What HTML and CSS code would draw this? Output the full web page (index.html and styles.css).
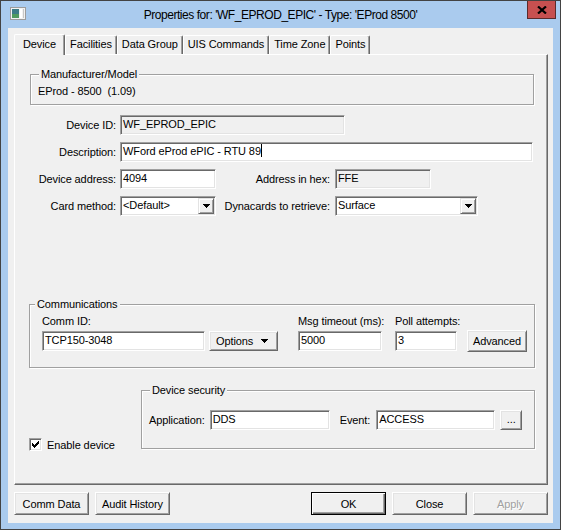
FILE: index.html
```html
<!DOCTYPE html>
<html lang="en">
<head>
    <meta charset="UTF-8">
    <title>Properties for: 'WF_EPROD_EPIC'</title>
    <link rel="stylesheet" href="styles.css">
</head>
<body>
    <div class="window">
        <!-- title bar -->
        <div class="titlebar">
            <svg class="app-icon" width="16" height="13" viewBox="0 0 16 13">
                <rect x="0.5" y="0.5" width="15" height="12" fill="#f2f2f2" stroke="#9c9c9c"/>
                <rect x="2" y="2" width="7" height="9" fill="#3c7c86"/>
                <rect x="2" y="7" width="7" height="4" fill="#4f9a5e"/>
                <rect x="10" y="2" width="2" height="9" fill="#ffffff"/>
                <rect x="13" y="2" width="1" height="9" fill="#c8c8c8"/>
            </svg>
            <div class="title">Properties for: 'WF_EPROD_EPIC' - Type: 'EProd 8500'</div>
            <div class="close">
                <svg width="10" height="8" viewBox="0 0 10 8">
                    <path d="M1 0.5 L9 7.5 M9 0.5 L1 7.5" stroke="#000" stroke-width="2.2"/>
                </svg>
            </div>
        </div>

        <div class="client">
            <!-- tabs -->
            <div class="tabs">
                <div class="tab active">Device</div>
                <div class="tab">Facilities</div>
                <div class="tab">Data Group</div>
                <div class="tab">UIS Commands</div>
                <div class="tab">Time Zone</div>
                <div class="tab">Points</div>
            </div>

            <div class="panel">
                <div class="group manuf">
                    <div class="group-title">Manufacturer/Model</div>
                    <div class="model">EProd - 8500&nbsp; (1.09)</div>
                </div>

                <div class="form">
                    <div class="row">
                        <span class="lbl">Device ID:</span>
                        <div class="field disabled w-id">WF_EPROD_EPIC</div>
                    </div>
                    <div class="row">
                        <span class="lbl">Description:</span>
                        <div class="field w-desc">WFord eProd ePIC - RTU 89<span class="caret"></span></div>
                    </div>
                    <div class="row">
                        <span class="lbl">Device address:</span>
                        <div class="field w-small">4094</div>
                        <span class="lbl2">Address in hex:</span>
                        <div class="field disabled w-small">FFE</div>
                    </div>
                    <div class="row">
                        <span class="lbl">Card method:</span>
                        <div class="field combo w-small">
                            <span class="combo-text">&lt;Default&gt;</span>
                            <span class="drop-btn">
                                <svg width="7" height="4" viewBox="0 0 7 4" shape-rendering="crispEdges"><path d="M0 0h7v1H0zM1 1h5v1H1zM2 2h3v1H2zM3 3h1v1H3z"/></svg>
                            </span>
                        </div>
                        <span class="lbl2">Dynacards to retrieve:</span>
                        <div class="field combo w-dyna">
                            <span class="combo-text">Surface</span>
                            <span class="drop-btn">
                                <svg width="7" height="4" viewBox="0 0 7 4" shape-rendering="crispEdges"><path d="M0 0h7v1H0zM1 1h5v1H1zM2 2h3v1H2zM3 3h1v1H3z"/></svg>
                            </span>
                        </div>
                    </div>
                </div>

                <!-- communications -->
                <div class="group comm">
                    <div class="group-title">Communications</div>
                    <div class="comm-body">
                        <div class="col">
                            <span class="col-lbl">Comm ID:</span>
                            <div class="col-row">
                                <div class="field w-comm">TCP150-3048</div>
                                <div class="btn options">
                                    <span>Options</span>
                                    <svg width="7" height="4" viewBox="0 0 7 4" shape-rendering="crispEdges"><path d="M0 0h7v1H0zM1 1h5v1H1zM2 2h3v1H2zM3 3h1v1H3z"/></svg>
                                </div>
                            </div>
                        </div>
                        <div class="col col-timeout">
                            <span class="col-lbl">Msg timeout (ms):</span>
                            <div class="field w-timeout">5000</div>
                        </div>
                        <div class="col col-poll">
                            <span class="col-lbl">Poll attempts:</span>
                            <div class="field w-poll">3</div>
                        </div>
                        <div class="btn advanced">Advanced</div>
                    </div>
                </div>

                <div class="lower">
                    <div class="enable">
                        <span class="checkbox">
                            <svg width="9" height="9" viewBox="0 0 9 9" shape-rendering="crispEdges"><path d="M1 3h1v3H1zM2 4h1v3H2zM3 5h1v3H3zM4 4h1v3H4zM5 3h1v3H5zM6 2h1v3H6zM7 1h1v3H7z"/></svg>
                        </span>
                        <span>Enable device</span>
                    </div>
                    <div class="group security">
                        <div class="group-title">Device security</div>
                        <div class="sec-body">
                            <span class="sec-lbl">Application:</span>
                            <div class="field w-app">DDS</div>
                            <span class="sec-lbl event-lbl">Event:</span>
                            <div class="field w-event">ACCESS</div>
                            <div class="btn dots">...</div>
                        </div>
                    </div>
                </div>
            </div>

            <!-- dialog buttons -->
            <div class="actions">
                <div class="btn">Comm Data</div>
                <div class="btn">Audit History</div>
                <div class="btn default ok">OK</div>
                <div class="btn">Close</div>
                <div class="btn disabled">Apply</div>
            </div>
        </div>
    </div>
</body>
</html>
```

FILE: styles.css
```css
* {
    box-sizing: border-box;
    margin: 0;
    padding: 0;
}

body {
    font-family: "Liberation Sans", Arial, sans-serif;
    font-size: 11px;
    letter-spacing: -0.1px;
    color: #000;
    background: #fff;
}

/* window frame */
.window {
    width: 561px;
    height: 530px;
    background: #aacbee;
    border: 1px solid #434343;
    display: flex;
    flex-direction: column;
}

.titlebar {
    height: 27px;
    display: flex;
    align-items: flex-start;
    flex: none;
}

.app-icon {
    margin: 6px 0 0 9px;
    flex: none;
}

.title {
    flex: 1;
    text-align: center;
    padding: 7px 0 0 8px;
    font-size: 12px;
    line-height: 15px;
    letter-spacing: -0.45px;
    white-space: nowrap;
}

.close {
    width: 29px;
    height: 18px;
    margin-right: 4px;
    background: #c75050;
    border: 1px solid #5b2b2b;
    border-top: none;
    display: flex;
    align-items: center;
    justify-content: center;
    flex: none;
}

.client {
    flex: 1;
    margin: 0 7px 6px;
    background: #f0f0f0;
    padding: 6px 5px 0 6px;
    display: flex;
    flex-direction: column;
}

/* tabs */
.tabs {
    display: flex;
    align-items: flex-end;
}

.tab {
    height: 19px;
    padding: 0 4px;
    line-height: 17px;
    white-space: nowrap;
    border: 1px solid;
    border-color: #fff #696969 transparent #fff;
    border-bottom: none;
    border-radius: 2px 2px 0 0;
    box-shadow: inset -1px 0 0 #a0a0a0;
}

.tab.active {
    height: 21px;
    padding: 0 8px;
    line-height: 18px;
    margin-bottom: -1px;
    background: #f0f0f0;
    position: relative;
    z-index: 1;
}

.panel {
    width: 534px;
    height: 431px;
    flex: none;
    border: 1px solid;
    border-color: #fff #696969 #696969 #fff;
    box-shadow: inset -1px -1px 0 #a0a0a0;
}

/* group boxes */
.group {
    border: 1px solid #a0a0a0;
    box-shadow: inset 1px 1px 0 #fff, 1px 1px 0 #fff;
}

.group-title {
    width: fit-content;
    margin: -7px 0 0 8px;
    padding: 0 2px;
    line-height: 13px;
    background: #f0f0f0;
}

.manuf {
    margin: 19px 0 0 15px;
    width: 504px;
    height: 31px;
}

.model {
    margin: 4px 0 0 7px;
    line-height: 13px;
    white-space: pre;
}

/* form rows */
.form {
    margin-top: 10px;
    display: flex;
    flex-direction: column;
    gap: 7px;
}

.row {
    display: flex;
    align-items: center;
    height: 20px;
}

.lbl {
    width: 101px;
    margin-right: 4px;
    text-align: right;
    white-space: nowrap;
}

.lbl2 {
    width: 114px;
    margin-right: 5px;
    text-align: right;
    white-space: nowrap;
}

.field {
    height: 20px;
    padding-left: 2px;
    line-height: 17px;
    white-space: nowrap;
    overflow: hidden;
    background: #fff;
    border: 1px solid;
    border-color: #a0a0a0 #fff #fff #a0a0a0;
    box-shadow: inset 1px 1px 0 #696969, inset -1px -1px 0 #e3e3e3;
    flex: none;
}

.field.disabled {
    background: #f0f0f0;
}

.caret {
    display: inline-block;
    width: 1px;
    height: 13px;
    background: #000;
    vertical-align: -2px;
}

.w-id { width: 225px; }
.w-desc { width: 413px; }
.w-small { width: 96px; }
.w-dyna { width: 143px; }
.w-comm { width: 163px; }
.w-timeout { width: 84px; }
.w-poll { width: 62px; }
.w-app { width: 120px; }
.w-event { width: 119px; }

.combo {
    display: flex;
    padding: 1px;
}

.combo-text {
    flex: 1;
    padding-left: 1px;
    line-height: 15px;
}

.drop-btn {
    width: 16px;
    height: 16px;
    display: flex;
    align-items: center;
    justify-content: center;
    background: #f0f0f0;
    border: 1px solid;
    border-color: #e3e3e3 #696969 #696969 #e3e3e3;
    box-shadow: inset 1px 1px 0 #fff, inset -1px -1px 0 #a0a0a0;
}

/* buttons */
.btn {
    height: 23px;
    width: 75px;
    display: flex;
    align-items: center;
    justify-content: center;
    white-space: nowrap;
    background: #f0f0f0;
    border: 1px solid;
    border-color: #fff #696969 #696969 #fff;
    box-shadow: inset 1px 1px 0 #e3e3e3, inset -1px -1px 0 #a0a0a0;
    flex: none;
}

.btn.default {
    border-color: #000;
    box-shadow: inset 1px 1px 0 #fff, inset -1px -1px 0 #696969, inset -2px -2px 0 #a0a0a0;
}

.btn.disabled {
    color: #a0a0a0;
    text-shadow: 1px 1px 0 #fff;
}

/* communications */
.comm {
    margin: 88px 0 0 14px;
    width: 506px;
    height: 64px;
}

.comm .group-title {
    margin-left: 5px;
}

.comm-body {
    display: flex;
    align-items: flex-end;
    margin-top: 4px;
    padding-left: 12px;
}

.col {
    display: flex;
    flex-direction: column;
    flex: none;
}

.col-lbl {
    line-height: 13px;
    margin-bottom: 3px;
    white-space: nowrap;
}

.col-row {
    display: flex;
}

.options {
    width: 69px;
    height: 20px;
    margin-left: 4px;
    justify-content: space-between;
    padding: 0 9px 0 6px;
}

.col-timeout {
    width: 84px;
    margin-left: 20px;
}

.col-poll {
    width: 62px;
    margin-left: 13px;
}

.advanced {
    width: 60px;
    height: 22px;
    margin: 0 0 -1px 10px;
}

/* lower area */
.lower {
    display: flex;
    margin-top: 22px;
}

.enable {
    width: 126px;
    height: 13px;
    margin-top: 48px;
    padding-left: 14px;
    display: flex;
    align-items: center;
    gap: 5px;
    white-space: nowrap;
}

.checkbox {
    width: 13px;
    height: 13px;
    flex: none;
    display: flex;
    align-items: center;
    justify-content: center;
    background: #fff;
    border: 1px solid;
    border-color: #a0a0a0 #fff #fff #a0a0a0;
    box-shadow: inset 1px 1px 0 #696969, inset -1px -1px 0 #e3e3e3;
}

.security {
    width: 394px;
    height: 59px;
}

.sec-body {
    display: flex;
    align-items: center;
    margin-top: 13px;
    padding-left: 7px;
}

.sec-lbl {
    margin-right: 5px;
}

.event-lbl {
    margin: 0 6px 0 10px;
}

.dots {
    width: 22px;
    height: 20px;
    margin-left: 5px;
    padding-bottom: 3px;
}

.actions {
    display: flex;
    gap: 6px;
    margin-top: 7px;
}

.ok {
    margin-left: auto;
}
```
